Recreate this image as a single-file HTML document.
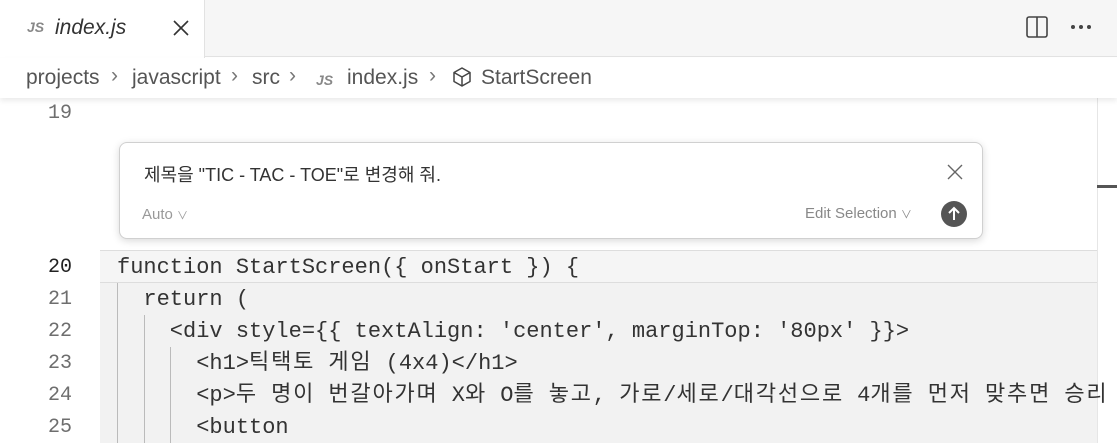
<!DOCTYPE html>
<html><head><meta charset="utf-8"><style>
*{margin:0;padding:0;box-sizing:border-box}
body{width:1117px;height:443px;overflow:hidden;background:#fff;font-family:"Liberation Sans","Noto Sans CJK KR",sans-serif;position:relative;color:#333}
.tabbar{position:absolute;left:0;top:0;width:1117px;height:57px;background:#f6f6f6;border-bottom:1px solid #e2e2e2}
.tab{position:absolute;left:0;top:0;width:205px;height:58px;background:#fff;border-right:1px solid #e2e2e2}
.js{font-style:italic;font-weight:bold;color:#888;font-size:14px}
.crumb{position:absolute;left:0;top:58px;width:1117px;height:40px;background:#fff;box-shadow:0 3px 5px rgba(0,0,0,.08);font-size:21px;color:#555;white-space:nowrap;z-index:2}
.crumb span{line-height:24px}
.code{position:absolute;left:100px;top:250px;width:997px;height:193px;background:#f2f2f2}
.ln{position:absolute;left:0;width:72px;text-align:right;font-family:"Liberation Mono",monospace;font-size:20px;color:#6e6e6e;line-height:32px;height:32px}
.cl{position:absolute;left:117px;font-family:"Liberation Mono","Noto Sans CJK KR",monospace;font-size:22px;color:#333;white-space:pre;line-height:32px;height:32px}
.k{letter-spacing:1.8px}
.guide{position:absolute;width:1px;background:#bbb}
.widget{position:absolute;left:119px;top:142px;width:864px;height:97px;background:#fff;border:1px solid #d0d0d0;border-radius:8px;box-shadow:0 2px 8px rgba(0,0,0,.15)}
</style></head><body>
<div class="tabbar">
 <div class="tab">
  <span class="js" style="position:absolute;left:27px;top:19px">JS</span>
  <span style="position:absolute;left:55px;top:16px;font-size:21px;font-style:italic;color:#333">index.js</span>
  <svg style="position:absolute;left:172px;top:19px" width="18" height="18" viewBox="0 0 18 18"><path d="M2 2L16 16M16 2L2 16" stroke="#333" stroke-width="1.6"/></svg>
 </div>
 <svg style="position:absolute;left:1025px;top:15px" width="24" height="24" viewBox="0 0 24 24"><rect x="2" y="2" width="20" height="20" rx="2" fill="none" stroke="#444" stroke-width="1.6"/><path d="M12 2V22" stroke="#444" stroke-width="1.6"/></svg>
 <svg style="position:absolute;left:1070px;top:24px" width="22" height="6"><circle cx="3" cy="3" r="2" fill="#444"/><circle cx="11" cy="3" r="2" fill="#444"/><circle cx="19" cy="3" r="2" fill="#444"/></svg>
</div>
<div class="crumb">
 <span style="position:absolute;left:26px;top:8px">projects</span>
 <span style="position:absolute;left:111px;top:6px;color:#777">›</span>
 <span style="position:absolute;left:132px;top:8px">javascript</span>
 <span style="position:absolute;left:231px;top:6px;color:#777">›</span>
 <span style="position:absolute;left:252px;top:8px">src</span>
 <span style="position:absolute;left:289px;top:6px;color:#777">›</span>
 <span class="js" style="position:absolute;left:316px;top:10px">JS</span>
 <span style="position:absolute;left:347px;top:8px">index.js</span>
 <span style="position:absolute;left:429px;top:6px;color:#777">›</span>
 <svg style="position:absolute;left:451px;top:8px" width="22" height="22" viewBox="0 0 22 22"><path d="M11 2L19 6.5V15.5L11 20L3 15.5V6.5Z M3 6.5L11 11L19 6.5 M11 11V20" fill="none" stroke="#444" stroke-width="1.5" stroke-linejoin="round"/></svg>
 <span style="position:absolute;left:481px;top:8px">StartScreen</span>
</div>
<div class="ln" style="top:98px">19</div>
<div style="position:absolute;left:1097px;top:98px;width:1px;height:345px;background:#e6e6e6"></div>
<div style="position:absolute;left:1097px;top:185px;width:20px;height:3px;background:#555"></div>
<div class="code"></div>
<div style="position:absolute;left:100px;top:250px;width:997px;height:33px;background:#f5f5f5;border-top:1px solid #ddd;border-bottom:1px solid #ddd"></div>
<div class="guide" style="left:117px;top:283px;height:160px"></div>
<div class="guide" style="left:144px;top:315px;height:128px"></div>
<div class="guide" style="left:170px;top:347px;height:96px"></div>
<div class="ln" style="top:252px;color:#222">20</div>
<div class="ln" style="top:284px">21</div>
<div class="ln" style="top:316px">22</div>
<div class="ln" style="top:348px">23</div>
<div class="ln" style="top:380px">24</div>
<div class="ln" style="top:412px">25</div>
<div class="cl" style="top:252px">function StartScreen({ onStart }) {</div>
<div class="cl" style="top:284px">  return (</div>
<div class="cl" style="top:316px">    &lt;div style={{ textAlign: 'center', marginTop: '80px' }}&gt;</div>
<div class="cl" style="top:348px">      &lt;h1&gt;<span class="k">틱택토</span> <span class="k">게임</span> (4x4)&lt;/h1&gt;</div>
<div class="cl" style="top:380px">      &lt;p&gt;<span class="k">두</span> <span class="k">명이</span> <span class="k">번갈아가며</span> X<span class="k">와</span> O<span class="k">를</span> <span class="k">놓고</span>, <span class="k">가로</span>/<span class="k">세로</span>/<span class="k">대각선으로</span> 4<span class="k">개를</span> <span class="k">먼저</span> <span class="k">맞추면</span> <span class="k">승리</span></div>
<div class="cl" style="top:412px">      &lt;button</div>
<div class="widget">
 <div style="position:absolute;left:24px;top:18px;font-size:18px;color:#333">제목을 "TIC - TAC - TOE"로 변경해 줘.</div>
 <svg style="position:absolute;left:827px;top:21px" width="16" height="16" viewBox="0 0 16 16"><path d="M1 1L15 15M15 1L1 15" stroke="#666" stroke-width="1.4"/></svg>
 <div style="position:absolute;left:22px;top:63px;font-size:15px;color:#999">Auto <span style="font-size:11px">∨</span></div>
 <div style="position:absolute;left:685px;top:62px;font-size:15px;color:#888">Edit Selection <span style="font-size:11px">∨</span></div>
 <div style="position:absolute;left:821px;top:58px;width:26px;height:26px;border-radius:50%;background:#555"></div>
 <svg style="position:absolute;left:821px;top:58px" width="26" height="26" viewBox="0 0 26 26"><path d="M13 19V7M8 12L13 7L18 12" fill="none" stroke="#fff" stroke-width="2"/></svg>
</div>
</body></html>
